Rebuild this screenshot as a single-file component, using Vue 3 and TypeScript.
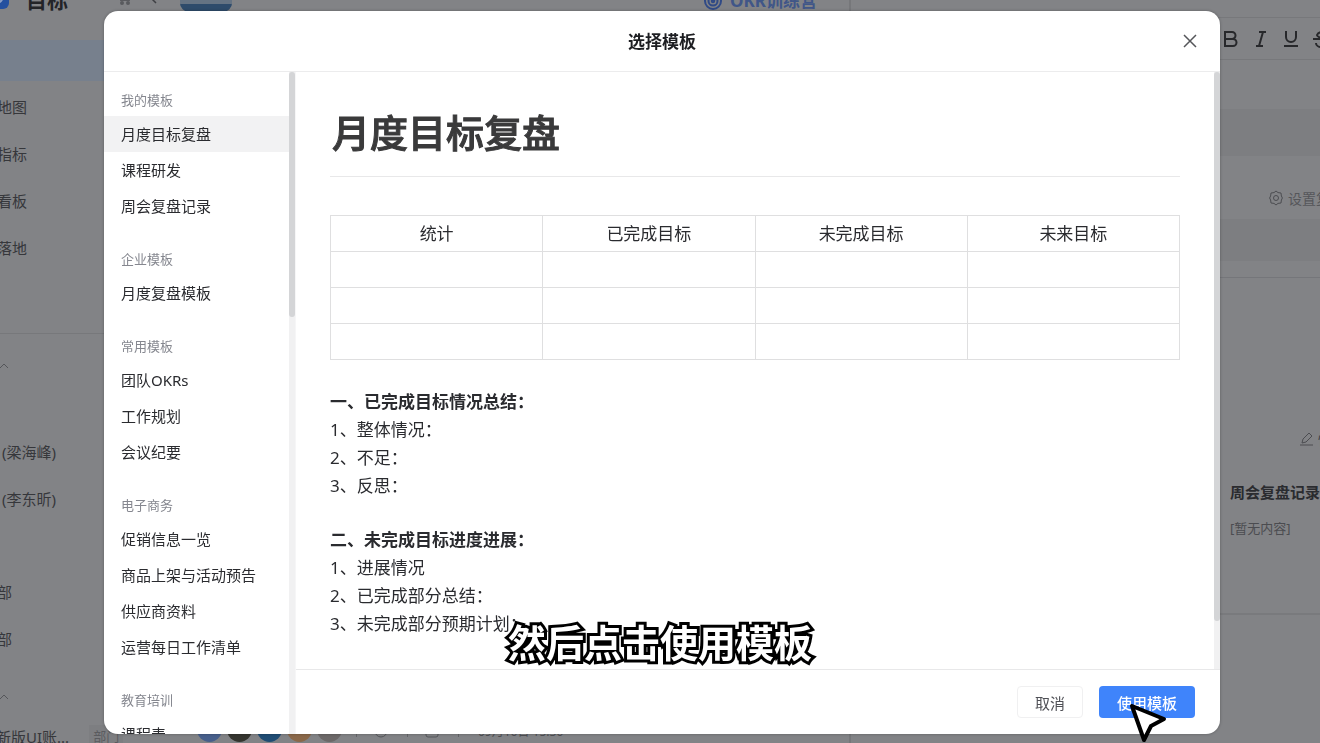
<script setup lang="ts">
import { ref } from 'vue'

interface Group {
  label: string
  items: string[]
}

const groups: Group[] = [
  { label: '我的模板', items: ['月度目标复盘', '课程研发', '周会复盘记录'] },
  { label: '企业模板', items: ['月度复盘模板'] },
  { label: '常用模板', items: ['团队OKRs', '工作规划', '会议纪要'] },
  { label: '电子商务', items: ['促销信息一览', '商品上架与活动预告', '供应商资料', '运营每日工作清单'] },
  { label: '教育培训', items: ['课程表'] },
]
const selected = ref('月度目标复盘')

const columns: string[] = ['统计', '已完成目标', '未完成目标', '未来目标']
const sections: { title: string; lines: string[] }[] = [
  { title: '一、已完成目标情况总结：', lines: ['1、整体情况：', '2、不足：', '3、反思：'] },
  { title: '二、未完成目标进度进展：', lines: ['1、进展情况', '2、已完成部分总结：', '3、未完成部分预期计划：'] },
]
const navItems: string[] = ['地图', '指标', '看板', '落地']
</script>

<template>
  <div class="page">
    <header class="topbar">
      <svg class="logo" width="26" height="26" viewBox="0 0 26 26">
        <rect width="26" height="26" rx="6" fill="#24509f" />
        <circle cx="13" cy="13" r="7" fill="none" stroke="#8b9fc6" stroke-width="2" />
        <path d="M12 14l9-9" stroke="#8b9fc6" stroke-width="2" />
      </svg>
      <strong class="brand">目标</strong>
      <svg class="cart" width="16" height="16" viewBox="0 0 16 16" fill="none" stroke="#595a5e" stroke-width="2">
        <path d="M0 1h3l2 9h8l2-6H4" />
        <circle cx="6" cy="13" r="1" /><circle cx="12" cy="13" r="1" />
      </svg>
      <svg class="back" width="8" height="12" viewBox="0 0 8 12" fill="none" stroke="#3f4044" stroke-width="1.5">
        <path d="M6 1L1 6l5 5" />
      </svg>
      <svg class="photo" width="52" height="52" viewBox="0 0 52 52">
        <rect width="52" height="52" rx="10" fill="#657383" />
        <path d="M0 44h52v-1a9 9 0 0 1-9 9H9a9 9 0 0 1-9-9z" fill="#2e4b6b" />
      </svg>
      <a class="camp" href="#">
        <svg width="19" height="19" viewBox="0 0 19 19" fill="none" stroke="#304a86" stroke-width="2">
          <circle cx="9" cy="9" r="8" /><circle cx="9" cy="9" r="4.5" /><circle cx="9" cy="9" r="1.2" />
          <path d="M9 9l8-8" />
        </svg>
        <span>OKR训练营</span>
      </a>
    </header>

    <nav class="side">
      <div class="current"></div>
      <a v-for="n in navItems" :key="n" class="row cut" href="#">{{ n }}</a>
      <div class="rule"></div>
      <svg class="caret first" width="8" height="6" viewBox="0 0 8 6"><path d="M0 5l4-4 4 4" /></svg>
      <a class="row" href="#">(梁海峰)</a>
      <a class="row" href="#">(李东昕)</a>
      <div class="gap"></div>
      <a class="row cut" href="#">部</a>
      <a class="row cut" href="#">部</a>
      <svg class="caret" width="8" height="6" viewBox="0 0 8 6"><path d="M0 5l4-4 4 4" /></svg>
      <div class="account"><span>新版UI账...</span><span class="tag">部门</span></div>
    </nav>

    <div class="feed">
      <i class="avatar a1"></i><i class="avatar a2"></i><i class="avatar a3"></i><i class="avatar a4"></i><i class="avatar a5"></i>
      <span class="bar"></span>
      <svg width="14" height="14" viewBox="0 0 14 14"><circle cx="7" cy="7" r="6" /><path d="M7 3v4h3" /></svg>
      <span class="bar"></span>
      <svg width="14" height="14" viewBox="0 0 14 14"><rect x="1" y="1" width="12" height="12" rx="2" /></svg>
      <span class="bar"></span>
      <time>09月16日 15:30</time>
    </div>

    <aside class="editor">
      <div class="tools">
        <button type="button" aria-label="Bold">
          <svg width="16" height="18" viewBox="0 0 16 18"><path d="M2 2h7a3.5 3.5 0 0 1 0 7H2zM2 9h8a3.5 3.5 0 0 1 0 7H2z" /></svg>
        </button>
        <button type="button" aria-label="Italic">
          <svg width="16" height="18" viewBox="0 0 16 18"><path d="M6 2h7M3 16h7M10 2L6 16" /></svg>
        </button>
        <button type="button" aria-label="Underline">
          <svg width="16" height="18" viewBox="0 0 16 18"><path d="M3 1v6a5 5 0 0 0 10 0V1M1 16h14" /></svg>
        </button>
        <button type="button" aria-label="Strikethrough">
          <svg width="16" height="18" viewBox="0 0 16 18"><path d="M13 4a5 4 0 0 0-9 1c0 3 9 3 9 8a5 4 0 0 1-10 0M0 9h16" /></svg>
        </button>
      </div>
      <div class="band one"></div>
      <button type="button" class="settings">
        <svg width="14" height="16" viewBox="0 0 14 16"><path d="M7 1l2 1.6 3 .4.4 3L13.4 8l-1 2-.4 3-3 .4L7 15l-2-1.6-3-.4-.4-3L.6 8l1-2L2 3l3-.4z" /><circle cx="7" cy="8" r="2.5" /></svg>
        <span>设置复盘</span>
      </button>
      <div class="band two"></div>
      <section class="record">
        <button type="button" class="edit">
          <svg width="14" height="14" viewBox="0 0 14 14"><path d="M2 11l1-4 6-6 3 3-6 6zM0 13h13" /></svg>
          <span>快速</span>
        </button>
        <h3>周会复盘记录</h3>
        <p>[暂无内容]</p>
      </section>
    </aside>
  </div>

  <div class="overlay">
    <div class="modal" role="dialog" aria-labelledby="dialog-title">
      <header class="head">
        <h2 id="dialog-title">选择模板</h2>
        <button type="button" class="close" aria-label="关闭">
          <svg width="14" height="14" viewBox="0 0 14 14"><path d="M1 1l12 12M13 1L1 13" /></svg>
        </button>
      </header>
      <div class="body">
        <nav class="list">
          <section v-for="g in groups" :key="g.label">
            <h4>{{ g.label }}</h4>
            <button
              v-for="t in g.items"
              :key="t"
              type="button"
              :class="{ on: t === selected }"
              @click="selected = t"
            >{{ t }}</button>
          </section>
        </nav>
        <div class="rail"><div class="thumb short"></div></div>
        <div class="right">
          <div class="view">
            <article>
              <h1>月度目标复盘</h1>
              <table>
                <thead>
                  <tr><th v-for="c in columns" :key="c" scope="col">{{ c }}</th></tr>
                </thead>
                <tbody>
                  <tr v-for="r in 3" :key="r"><td v-for="c in columns" :key="c"></td></tr>
                </tbody>
              </table>
              <section v-for="s in sections" :key="s.title">
                <h5>{{ s.title }}</h5>
                <p v-for="l in s.lines" :key="l">{{ l }}</p>
              </section>
            </article>
            <div class="rail"><div class="thumb long"></div></div>
          </div>
          <footer>
            <button type="button" class="cancel">取消</button>
            <button type="button" class="use">使用模板</button>
          </footer>
        </div>
      </div>
    </div>
    <div class="caption">然后点击使用模板</div>
    <svg class="pointer" width="44" height="46" viewBox="0 0 44 46">
      <path d="M5 5L37 18L24 25L17 39Z" />
    </svg>
  </div>
</template>

<style>
body {
  background: #828386;
}
</style>

<style scoped>
.page,
.overlay {
  font-family: "Noto Sans", "Noto Sans CJK SC", sans-serif;
  font-size: 15px;
}
.page *,
.overlay * {
  box-sizing: border-box;
}
.page button,
.overlay button {
  font: inherit;
  color: inherit;
  border: 0;
  background: none;
  padding: 0;
}
h1, h2, h3, h4, h5, p {
  margin: 0;
}
a {
  color: inherit;
  text-decoration: none;
}
svg {
  display: block;
  flex: none;
}

/* Dimmed workspace behind the dialog */
.page {
  display: grid;
  grid-template-columns: 178px 1fr 471px;
  grid-template-rows: 40px 1fr;
  height: 100vh;
  overflow: hidden;
  background: #828386;
  color: #36373b;
}
.topbar {
  grid-column: 1 / 3;
  display: flex;
  align-items: flex-end;
  height: 12px;
}
.logo {
  margin: 0 17px 3px -17px;
}
.brand {
  font-size: 21px;
  line-height: 24px;
  color: #232428;
}
.cart {
  margin: 0 18px 6px 48px;
}
.back {
  margin: 0 22px 8px 0;
}
.camp {
  display: flex;
  align-items: center;
  gap: 7px;
  margin: 0 32px 0 auto;
  font-size: 17px;
  line-height: 22px;
  font-weight: 700;
  color: #405688;
}
.side {
  grid-column: 1;
  grid-row: 2;
  min-height: 0;
  overflow: hidden;
  display: flex;
  flex-direction: column;
}
.side > * {
  flex: none;
}
.current {
  height: 41px;
  margin-bottom: 3px;
  background: #77808d;
}
.row {
  padding-left: 2px;
  line-height: 47px;
}
.cut {
  margin-left: -5px;
}
.rule {
  height: 1px;
  margin-top: 61px;
  background: #77787b;
}
.caret {
  margin: 31px 0 14px;
  fill: none;
  stroke: #55565a;
}
.caret.first {
  margin: 29px 0 60px;
}
.gap {
  height: 46px;
}
.account {
  display: flex;
  align-items: center;
  gap: 20px;
  height: 44px;
  margin-left: -4px;
  white-space: nowrap;
}
.tag {
  padding: 0 4px;
  font-size: 13px;
  line-height: 22px;
  background: #7d7e81;
  color: #5a5b5f;
}
.feed {
  grid-column: 2;
  grid-row: 2;
  align-self: end;
  display: flex;
  align-items: flex-end;
  gap: 5px;
  padding: 0 0 1px 19px;
  color: #4f5054;
}
.feed svg {
  margin: 0 5px 4px 8px;
  fill: none;
  stroke: #55565a;
}
.avatar {
  width: 25px;
  height: 25px;
  border-radius: 50%;
}
.a1 { background: #475f8b; }
.a2 { background: #35352f; }
.a3 { background: #204d74; }
.a4 { background: #8a6849; }
.a5 { background: #6c6868; }
.bar {
  width: 1px;
  height: 13px;
  margin: 0 4px 5px 9px;
  background: #66676a;
}
.feed time {
  font-size: 12px;
  line-height: 16px;
  margin: 0 0 2px 10px;
}
.editor {
  grid-column: 3;
  grid-row: 1 / 3;
  display: flex;
  flex-direction: column;
  border-left: 2px solid #76777a;
  padding-top: 17px;
  overflow: hidden;
  white-space: nowrap;
}
.tools {
  display: flex;
  align-items: center;
  gap: 14px;
  height: 43px;
  padding-left: 372px;
  border-top: 1px solid #77787b;
  border-bottom: 1px solid #77787b;
}
.editor svg {
  fill: none;
  stroke: #4c4d51;
}
.editor .tools svg {
  stroke: #27282b;
  stroke-width: 2;
}
.band {
  background: #7d7e81;
}
.one {
  height: 47px;
  margin-top: 49px;
}
.page .settings {
  display: flex;
  align-items: center;
  gap: 5px;
  height: 63px;
  padding: 20px 0 0 418px;
  font-size: 14px;
  color: #55565a;
}
.two {
  height: 42px;
}
.record {
  height: 338px;
  margin-top: 16px;
  border-top: 1px solid #75767a;
  border-bottom: 2px solid #797a7d;
}
.page .edit {
  display: flex;
  align-items: center;
  gap: 4px;
  margin-top: 150px;
  padding-left: 449px;
  font-size: 15px;
  line-height: 22px;
}
.record h3 {
  margin: 30px 0 13px;
  padding-left: 379px;
  font-size: 15px;
  line-height: 24px;
  color: #2a2b2f;
}
.record p {
  padding-left: 379px;
  font-size: 13px;
  line-height: 22px;
  color: #4b4c50;
}

/* Dialog */
.overlay {
  position: fixed;
  inset: 0;
  display: flex;
  padding: 11px 100px 9px 104px;
  overflow: hidden;
  box-sizing: border-box;
}
.modal {
  flex: 1;
  min-width: 0;
  display: flex;
  flex-direction: column;
  overflow: hidden;
  border-radius: 14px;
  background: #fff;
  color: #2a2b2f;
  box-shadow: 0 0 3px rgba(0, 0, 0, 0.3);
}
.head {
  display: grid;
  grid-template-columns: 60px 1fr 60px;
  align-items: center;
  height: 61px;
  flex: none;
  border-bottom: 1px solid #ececed;
}
.head h2 {
  grid-column: 2;
  padding-top: 2px;
  text-align: center;
  font-size: 17px;
  line-height: 24px;
  color: #1d1e22;
}
.close {
  display: grid;
  place-items: center;
  height: 32px;
}
.close svg {
  fill: none;
  stroke: #55565a;
  stroke-width: 1.5;
}
.body {
  flex: 1;
  min-height: 0;
  display: flex;
}
.list {
  width: 185px;
  flex: none;
  overflow: hidden;
}
.list h4 {
  padding: 25px 17px 6px;
  font-size: 13px;
  line-height: 20px;
  font-weight: 400;
  color: #85878f;
}
.list section:first-child h4 {
  padding-top: 18px;
}
.overlay .list button {
  display: block;
  width: 100%;
  padding-left: 17px;
  text-align: left;
  line-height: 36px;
}
.overlay .list .on {
  background: #f2f2f3;
}
.rail {
  width: 6px;
  flex: none;
  background: #f1f1f2;
}
.thumb {
  border-radius: 3px;
  background: #d4d5d7;
}
.short {
  height: 37%;
}
.long {
  height: 92%;
}
.right {
  flex: 1;
  min-width: 0;
  display: flex;
  flex-direction: column;
  border-left: 1px solid #f6f6f7;
}
.view {
  flex: 1;
  min-height: 0;
  display: flex;
}
article {
  flex: 1;
  min-width: 0;
  overflow: hidden;
  padding: 32px 34px 0;
  font-size: 17px;
  line-height: 28px;
}
h1 {
  padding: 0 2px 16px;
  border-bottom: 1px solid #e8e8e9;
  font-size: 38px;
  line-height: 56px;
  font-weight: 500;
  color: #3a3a3b;
  -webkit-text-stroke: 1px #3a3a3b;
}
table {
  width: 100%;
  margin: 38px 0 28px;
  table-layout: fixed;
  border-collapse: collapse;
}
th,
td {
  height: 36px;
  padding: 0;
  border: 1px solid #dfdfe0;
  font-weight: 400;
  text-align: center;
}
article section {
  margin-bottom: 26px;
}
h5 {
  font-size: 17px;
  line-height: 28px;
}
footer {
  display: flex;
  justify-content: flex-end;
  align-items: center;
  gap: 16px;
  height: 65px;
  flex: none;
  padding-right: 25px;
  border-top: 1px solid #e8e8e9;
}
.overlay footer button {
  height: 32px;
  border-radius: 4px;
}
.overlay footer .cancel {
  padding: 0 17px;
  border: 1px solid #f0f0f1;
  color: #4f5056;
}
.overlay footer .use {
  padding: 0 18px;
  background: #3f84fb;
  color: #fff;
  font-weight: 500;
}

.caption {
  position: absolute;
  left: 0;
  right: 0;
  bottom: 73px;
  text-align: center;
  font-size: 38px;
  line-height: 56px;
  font-weight: 700;
  color: #fff;
  -webkit-text-stroke: 6px #000;
  paint-order: stroke fill;
  stroke-linejoin: round;
  pointer-events: none;
}
.pointer {
  position: absolute;
  right: 149px;
  bottom: -4px;
  fill: #fff;
  stroke: #000;
  stroke-width: 4;
  stroke-linejoin: round;
  pointer-events: none;
}
</style>
